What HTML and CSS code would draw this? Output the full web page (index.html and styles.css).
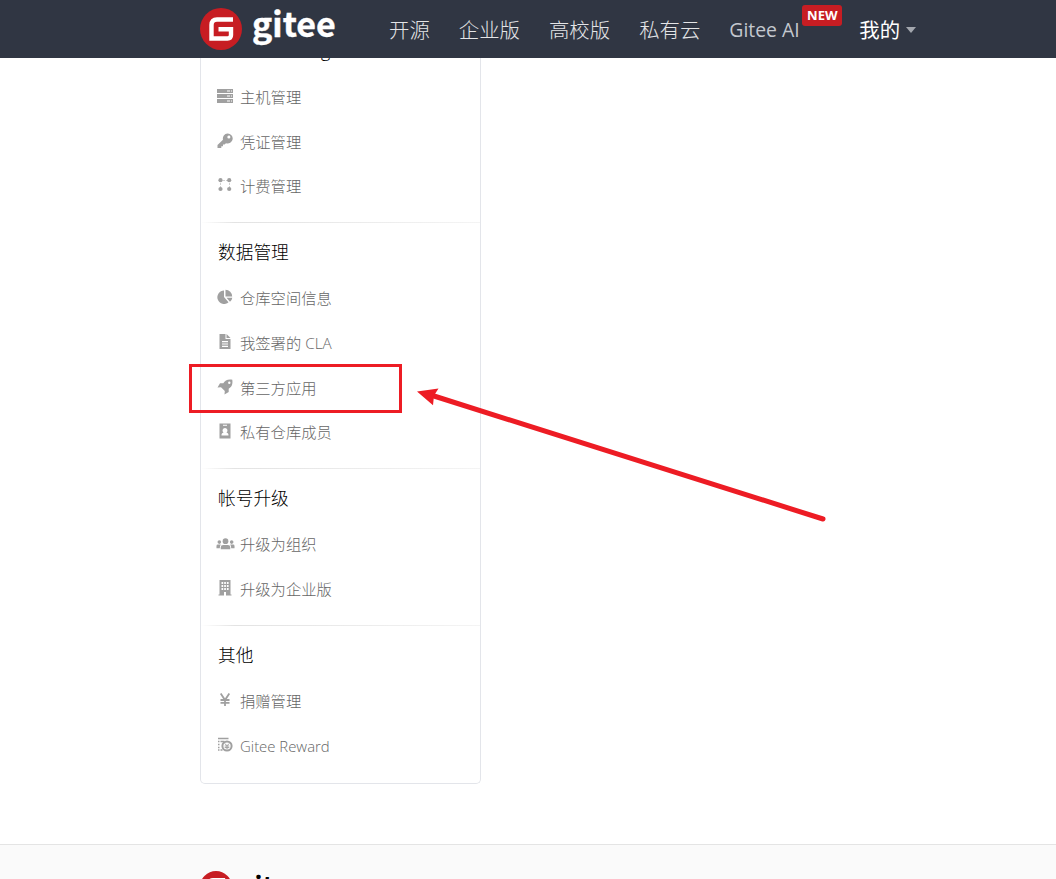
FILE: index.html
```html
<!DOCTYPE html>
<html lang="zh-CN">
<head>
<meta charset="utf-8">
<title>Gitee</title>
<link rel="stylesheet" href="styles.css">
</head>
<body>
<header class="topbar">
  <a class="logo">
    <svg class="logo-mark" viewBox="0 0 42 42"><circle cx="21" cy="21" r="21" fill="#c71d23"/><path d="M33 11.500H17Q11.500 11.500 11.500 17V30.500H27.500Q31 30.500 31 27V21.200H18.500" fill="none" stroke="#fff" stroke-width="4.400"/></svg>
    <span class="logo-text">gitee</span>
  </a>
  <nav class="nav">
    <a>开源</a><a>企业版</a><a>高校版</a><a>私有云</a><a class="ai">Gitee AI<span class="new">NEW</span></a><a class="mine">我的<span class="caret"></span></a>
  </nav>
</header>
<main class="page">
  <aside class="menu">
    <section class="group">
      <h2 class="title cut"><span>g</span></h2>
      <a class="item"><svg class="icon" viewBox="0 0 16 16"><path fill-rule="evenodd" d="M0 1h16v4H0zM0 6h16v4H0zM0 11h16v4H0zM10 2.500v1h3v-1zM14 2.500v1h1v-1zM10 7.500v1h3v-1zM14 7.500v1h1v-1zM10 12.500v1h3v-1zM14 12.500v1h1v-1z"/></svg>主机管理</a>
      <a class="item"><svg class="icon" viewBox="0 0 16 16"><path fill-rule="evenodd" d="M10.500.5a5 5 0 1 1-1.500 9.700L7.500 11.500H6v1.700H4.300V15H.5v-3L6 6.700A5 5 0 0 1 10.500.5zM11.800 2.600a1.500 1.500 0 1 0 .1 3 1.500 1.500 0 0 0-.1-3z"/></svg>凭证管理</a>
      <a class="item"><svg class="icon" viewBox="0 0 16 16"><path d="M3.500 3.500h9M3.500 3.500v9M12.500 3.500v9" fill="none" stroke="#a0a0a0" stroke-dasharray="1 2"/><circle cx="3.500" cy="3.200" r="2.100"/><circle cx="12.200" cy="3.200" r="2.100"/><circle cx="3.500" cy="12" r="2.100"/><circle cx="12.200" cy="12" r="2.100"/></svg>计费管理</a>
    </section>
    <section class="group">
      <h2 class="title">数据管理</h2>
      <a class="item"><svg class="icon" viewBox="0 0 16 16"><path d="M7 1.500V8l4.500 5.200A6.700 6.700 0 1 1 7 1.500zM8.500.8A6.700 6.700 0 0 1 15.200 7.500H8.500zM9.500 8.800h5.800a6 6 0 0 1-2.300 4z"/></svg>仓库空间信息</a>
      <a class="item"><svg class="icon" viewBox="0 0 16 16"><path fill-rule="evenodd" d="M2.500 0h6v5h5v10h-11zM9.500 0l4 4h-4zM5 7v1.200h6V7zM5 9.400v1.200h6V9.400zM5 11.800V13h6v-1.200z"/></svg>我签署的 CLA</a>
      <a class="item"><svg class="icon" viewBox="0 0 16 16"><path fill-rule="evenodd" d="M15.300.7C10.500 0 8 1.500 6.300 4.300H3L.5 8.500l3.500-.3 3.800 3.800-.3 3.500 4.200-2.500V9.700C14.500 8 16 5.500 15.300.7zM12.300 2.500a1.200 1.200 0 1 1 0 2.400 1.200 1.200 0 0 1 0-2.400z"/></svg>第三方应用</a>
      <a class="item"><svg class="icon" viewBox="0 0 16 16"><path fill-rule="evenodd" d="M2.500.5h11v15h-11zM6 1.800v1h4v-1zM8 5a2.500 2.500 0 0 0-1.500 4.500C5 10 4.500 10.500 4.500 12.500h7c0-2-.5-2.500-2-3A2.500 2.500 0 0 0 8 5z"/></svg>私有仓库成员</a>
    </section>
    <section class="group">
      <h2 class="title">帐号升级</h2>
      <a class="item"><svg class="icon wide" viewBox="0 0 20 16"><circle cx="10" cy="5" r="3"/><circle cx="3.500" cy="6" r="1.900"/><circle cx="16.500" cy="6" r="1.900"/><path d="M5 13.500v-2Q5 9 7.500 9h5Q15 9 15 11.500v2zM.5 12.500V10q0-1.500 1.500-1.500h3Q4 10 4 12.500zM19.500 12.500V10q0-1.500-1.500-1.500h-3q1 1.500 1 4z"/></svg>升级为组织</a>
      <a class="item"><svg class="icon" viewBox="0 0 16 16"><path fill-rule="evenodd" d="M2.500 0h11v14.500h1v1H9v-3.500H7v3.500H1.500v-1h1zM4.500 2v2h1.700V2zM7.200 2v2h1.700V2zM9.900 2v2h1.700V2zM4.500 5v2h1.700V5zM7.200 5v2h1.700V5zM9.900 5v2h1.700V5zM4.500 8v2h1.700V8zM7.200 8v2h1.700V8zM9.900 8v2h1.700V8z"/></svg>升级为企业版</a>
    </section>
    <section class="group">
      <h2 class="title">其他</h2>
      <a class="item"><svg class="icon" viewBox="0 0 16 16"><path d="M3.700 1.500L8 8l4.300-6.500M8 7.500V14M3.500 8h9M3.500 10.800h9" fill="none" stroke="#a0a0a0" stroke-width="1.800"/></svg>捐赠管理</a>
      <a class="item"><svg class="icon" viewBox="0 0 16 16"><path d="M1 1.500h10.500M1 4.500h1.500M3.500 4.500h4M1 7.500h1.500M1 10.500h1.500M1 13h1.500M3.500 13h2" fill="none" stroke="#a0a0a0" stroke-width="1.400"/><circle cx="10" cy="9" r="4.600" fill="none" stroke="#a0a0a0" stroke-width="2"/><path d="M7.900 6.500L10 8.800l2.100-2.300M10 8.500v3.500M7.700 9h4.600M7.700 10.600h4.600" fill="none" stroke="#a0a0a0"/></svg><span class="latin">Gitee Reward</span></a>
    </section>
  </aside>
</main>
<footer class="footer">
  <svg class="logo-mark" viewBox="0 0 42 42"><circle cx="21" cy="21" r="21" fill="#c71d23"/><path d="M33 11.500H17Q11.500 11.500 11.500 17V30.500" fill="none" stroke="#fff" stroke-width="4.400"/></svg>
  <span class="logo-text">gitee</span>
</footer>
<div class="mark-box"></div>
<svg class="mark-arrow" viewBox="0 0 420 145"><path d="M24 16L413 139" fill="none" stroke="#ed1c24" stroke-width="5" stroke-linecap="round"/><path d="M7 11.500L28.500 8.500l-4.500 7L23 25.200z" fill="#ed1c24"/></svg>
</body>
</html>
```
FILE: styles.css
```css
* { box-sizing: border-box; }
body {
  margin: 0;
  height: 879px;
  overflow: hidden;
  position: relative;
  background: #fff;
  font-family: "Open Sans", "Noto Sans CJK SC", sans-serif;
}
.topbar {
  display: flex;
  height: 58px;
  padding-left: 200px;
  background: #303643;
}
.logo { display: flex; width: 189px; padding-top: 8px; }
.logo-mark { width: 42px; height: 42px; flex: none; }
.logo-text {
  margin-left: 10px;
  font: 700 34px/36px "Noto Sans CJK SC", sans-serif;
  color: #fff;
  -webkit-text-stroke: .4px #fff;
}
.logo .logo-text { margin-top: -3px; }
.nav {
  display: flex;
  gap: 29px;
  font-size: 20.4px;
  font-weight: 300;
  line-height: 60px;
  color: #e4e5e7;
  white-space: nowrap;
}
.ai { position: relative; width: 101px; font-size: 19.400px; font-weight: 400; color: #c4c8cf; }
.new {
  position: absolute;
  left: 73px;
  top: 5px;
  width: 40px;
  height: 21px;
  border-radius: 3px;
  background: #c71d23;
  color: #fff;
  font: 700 13px/20px "Open Sans", sans-serif;
  text-align: center;
}
.mine { display: flex; align-items: center; padding-top: 2px; color: #fff; font-weight: 400; }
.caret {
  margin-left: 6px;
  border: 5.5px solid transparent;
  border-top: 6px solid #a3a7ae;
  border-bottom: 0;
}
.page { height: 786px; padding-left: 200px; }
.menu {
  width: 281px;
  height: 726px;
  border: 1px solid #e3e5ea;
  border-top: 0;
  border-radius: 0 0 5px 5px;
}
.group { padding: 0 17px 14.300px; }
.group + .group {
  background: linear-gradient(90deg, #fff, #e3e3e3 12%, #f4f4f4) 0 0 / 100% 1px no-repeat;
}
.title {
  margin: 0;
  height: 53px;
  padding-top: 4px;
  font-size: 17.700px;
  font-weight: 300;
  line-height: 53px;
  color: #000;
}
.cut {
  height: 15.700px;
  padding: 0 0 0 103px;
  overflow: hidden;
  line-height: 0;
}
.cut span { display: block; margin-top: -14px; line-height: 12px; }
.item {
  display: flex;
  align-items: center;
  height: 44.700px;
  font-size: 15.300px;
  font-weight: 300;
  color: #666;
}
.latin { padding-top: 2px; font-size: 14.900px; }
.icon { width: 16px; height: 16px; margin: 0 7px 0 -1px; fill: #a0a0a0; }
.wide { width: 19px; margin: 2px 5px 0 -2px; }
.footer {
  display: flex;
  height: 35px;
  padding: 26px 0 0 200px;
  border-top: 1px solid #e4e4e4;
  background: #fafafa;
  overflow: hidden;
}
.footer .logo-mark { width: 32px; height: 32px; }
.footer .logo-text { font-size: 26px; color: #000; -webkit-text-stroke: 0; margin: -4px 0 0 7px; }
.mark-box {
  position: absolute;
  left: 189px;
  top: 364px;
  width: 213px;
  height: 49px;
  border: 3px solid #ed1c24;
}
.mark-arrow { position: absolute; left: 410px; top: 380px; width: 420px; height: 145px; }
```
